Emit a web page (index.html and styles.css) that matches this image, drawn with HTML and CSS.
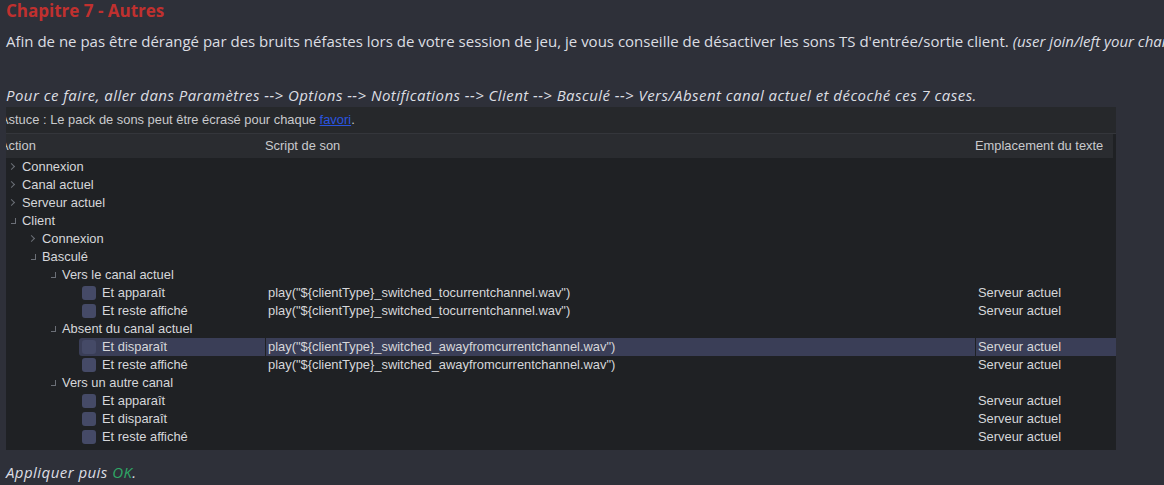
FILE: index.html
```html
<!DOCTYPE html>
<html lang="fr">
<head>
  <meta charset="UTF-8">
  <title>Chapitre 7 - Autres</title>
  <link rel="stylesheet" href="styles.css">
</head>
<body>

  <h2 class="title">Chapitre 7 - Autres</h2>
  <p class="intro">Afin de ne pas être dérangé par des bruits néfastes lors de votre session de jeu, je vous conseille de désactiver les sons TS d'entrée/sortie client. <em>(user join/left your channel)</em></p>
  <p class="steps"><em>Pour ce faire, aller dans Paramètres --&gt; Options --&gt; Notifications --&gt; Client --&gt; Basculé --&gt; Vers/Absent canal actuel et décoché ces 7 cases.</em></p>

  <!-- capture of the TS notifications panel -->
  <div class="shot">
    <div class="tip"><span>Astuce : Le pack de sons peut être écrasé pour chaque <a href="#">favori</a>.</span></div>
    <div class="row head">
      <div class="cell"><span class="clip">Action</span></div>
      <div class="cell">Script de son</div>
      <div class="cell">Emplacement du texte</div>
    </div>

    <div class="tree">
      <div class="row"><div class="cell lv0"><span class="tw closed"></span>Connexion</div><div class="cell"></div><div class="cell"></div></div>
      <div class="row"><div class="cell lv0"><span class="tw closed"></span>Canal actuel</div><div class="cell"></div><div class="cell"></div></div>
      <div class="row"><div class="cell lv0"><span class="tw closed"></span>Serveur actuel</div><div class="cell"></div><div class="cell"></div></div>
      <div class="row"><div class="cell lv0"><span class="tw open"></span>Client</div><div class="cell"></div><div class="cell"></div></div>
      <div class="row"><div class="cell lv1"><span class="tw closed"></span>Connexion</div><div class="cell"></div><div class="cell"></div></div>
      <div class="row"><div class="cell lv1"><span class="tw open"></span>Basculé</div><div class="cell"></div><div class="cell"></div></div>
      <div class="row"><div class="cell lv2"><span class="tw open"></span>Vers le canal actuel</div><div class="cell"></div><div class="cell"></div></div>
      <div class="row"><div class="cell lv3"><span class="item"><span class="box"></span>Et apparaît</span></div><div class="cell">play("${clientType}_switched_tocurrentchannel.wav")</div><div class="cell">Serveur actuel</div></div>
      <div class="row"><div class="cell lv3"><span class="item"><span class="box"></span>Et reste affiché</span></div><div class="cell">play("${clientType}_switched_tocurrentchannel.wav")</div><div class="cell">Serveur actuel</div></div>
      <div class="row"><div class="cell lv2"><span class="tw open"></span>Absent du canal actuel</div><div class="cell"></div><div class="cell"></div></div>
      <div class="row selected"><div class="cell lv3"><span class="item"><span class="box"></span>Et disparaît</span></div><div class="cell">play("${clientType}_switched_awayfromcurrentchannel.wav")</div><div class="cell">Serveur actuel</div></div>
      <div class="row"><div class="cell lv3"><span class="item"><span class="box"></span>Et reste affiché</span></div><div class="cell">play("${clientType}_switched_awayfromcurrentchannel.wav")</div><div class="cell">Serveur actuel</div></div>
      <div class="row"><div class="cell lv2"><span class="tw open"></span>Vers un autre canal</div><div class="cell"></div><div class="cell"></div></div>
      <div class="row"><div class="cell lv3"><span class="item"><span class="box"></span>Et apparaît</span></div><div class="cell"></div><div class="cell">Serveur actuel</div></div>
      <div class="row"><div class="cell lv3"><span class="item"><span class="box"></span>Et disparaît</span></div><div class="cell"></div><div class="cell">Serveur actuel</div></div>
      <div class="row"><div class="cell lv3"><span class="item"><span class="box"></span>Et reste affiché</span></div><div class="cell"></div><div class="cell">Serveur actuel</div></div>
    </div>
  </div>

  <p class="apply"><em>Appliquer puis <span class="ok">OK</span>.</em></p>

</body>
</html>
```

FILE: styles.css
```css
/* Page */
body {
  margin: 0;
  padding: 0 6px;
  background-color: #2e3039;
  color: #dcdee3;
  font-family: "Open Sans", sans-serif;
  font-size: 15px;
  white-space: nowrap;
  overflow: hidden;
}

.title {
  margin: 0;
  font-size: 17px;
  line-height: 22px;
  font-weight: bold;
  color: #c0302f;
}

.intro {
  margin: 7px 0 0;
  line-height: 24px;
}

.steps {
  margin: 30px 0 0;
  line-height: 24px;
  letter-spacing: 0.45px;
}

.apply {
  margin: 10px 0 0;
  line-height: 24px;
  letter-spacing: 0.45px;
}

.ok {
  color: #2ea866;
}

/* Screenshot of the client window */
.shot {
  width: 1110px;
  background-color: #1f2124;
  font-family: "Liberation Sans", Arial, sans-serif;
  font-size: 12.9px;
  color: #d6d7da;
  padding-bottom: 4px;
  overflow: hidden;
}

.tip {
  height: 26px;
  line-height: 26px;
  background-color: #26282b;
  border-bottom: 1px solid #34363b;
  color: #c9cacd;
  overflow: hidden;
}

.tip span,
.clip {
  margin-left: -6px;
}

.tip a {
  color: #2a55e0;
}

.row {
  display: grid;
  grid-template-columns: 259px 710px 1fr;
  height: 18px;
  line-height: 18px;
}

.row.head {
  height: 24px;
  line-height: 24px;
  margin-right: 3px;
  background-color: #2a2c30;
  color: #c9cacd;
}

.head .cell {
  padding-left: 0;
}

.cell {
  display: flex;
  align-items: center;
  overflow: hidden;
  padding-left: 3px;
}

.tree .lv0 { padding-left: 2px; }
.tree .lv1 { padding-left: 22px; }
.tree .lv2 { padding-left: 42px; }
.tree .lv3 { padding-left: 73px; }

.tw {
  position: relative;
  width: 14px;
  height: 18px;
  flex: none;
}

.tw::after {
  content: "";
  position: absolute;
  border-right: 1px solid #6b6f77;
  border-bottom: 1px solid #6b6f77;
}

.tw.closed::after {
  left: 1px;
  top: 6px;
  width: 4px;
  height: 4px;
  transform: rotate(-45deg);
}

.tw.open::after {
  left: 3px;
  top: 6px;
  width: 4px;
  height: 5px;
}

.item {
  display: flex;
  align-items: center;
  flex: 1;
  height: 18px;
  padding-left: 3px;
  border-radius: 3px 0 0 3px;
}

.box {
  width: 14px;
  height: 14px;
  margin-right: 6px;
  border-radius: 3px;
  background-color: #454a67;
}

.selected .item,
.selected .cell + .cell {
  background-color: #3a3e57;
}

.selected .cell + .cell {
  margin-left: 1px;
  padding-left: 2px;
}
```
